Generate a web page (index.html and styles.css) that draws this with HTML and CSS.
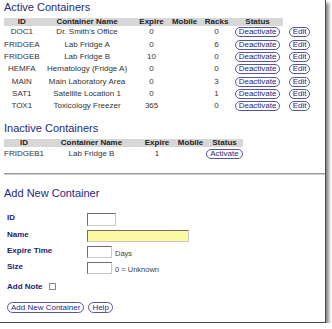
FILE: index.html
```html
<!DOCTYPE html>
<html lang="en">
<head>
    <meta charset="UTF-8">
    <title>Containers</title>
    <link rel="stylesheet" href="styles.css">
</head>
<body>
    <div class="frame">
        <h2 class="section-title">Active Containers</h2>
        <table class="list active-list">
            <tr>
                <th class="col-id">ID</th>
                <th class="col-name">Container Name</th>
                <th class="col-expire">Expire</th>
                <th class="col-mobile">Mobile</th>
                <th class="col-racks">Racks</th>
                <th class="col-status">Status</th>
                <th class="col-edit blank"></th>
            </tr>
            <tr><td>DOC1</td><td>Dr. Smith's Office</td><td>0</td><td></td><td>0</td><td><button>Deactivate</button></td><td><button>Edit</button></td></tr>
            <tr class="tall"><td>FRIDGEA</td><td>Lab Fridge A</td><td>0</td><td></td><td>6</td><td><button>Deactivate</button></td><td><button>Edit</button></td></tr>
            <tr><td>FRIDGEB</td><td>Lab Fridge B</td><td>10</td><td></td><td>0</td><td><button>Deactivate</button></td><td><button>Edit</button></td></tr>
            <tr><td>HEMFA</td><td>Hematology (Fridge A)</td><td>0</td><td></td><td>0</td><td><button>Deactivate</button></td><td><button>Edit</button></td></tr>
            <tr class="tall"><td>MAIN</td><td>Main Laboratory Area</td><td>0</td><td></td><td>3</td><td><button>Deactivate</button></td><td><button>Edit</button></td></tr>
            <tr><td>SAT1</td><td>Satellite Location 1</td><td>0</td><td></td><td>1</td><td><button>Deactivate</button></td><td><button>Edit</button></td></tr>
            <tr><td>TOX1</td><td>Toxicology Freezer</td><td>365</td><td></td><td>0</td><td><button>Deactivate</button></td><td><button>Edit</button></td></tr>
        </table>

        <h2 class="section-title inactive-title">Inactive Containers</h2>
        <table class="list inactive-list">
            <tr>
                <th class="col-id2">ID</th>
                <th class="col-name2">Container Name</th>
                <th class="col-expire2">Expire</th>
                <th class="col-mobile2">Mobile</th>
                <th class="col-status2">Status</th>
            </tr>
            <tr class="tall"><td class="left">FRIDGEB1</td><td>Lab Fridge B</td><td>1</td><td></td><td><button>Activate</button></td></tr>
        </table>

        <hr>

        <h2 class="section-title">Add New Container</h2>
        <form class="add-form">
            <div class="form-row first">
                <label for="cid">ID</label>
                <input type="text" id="cid" class="field field-id">
            </div>
            <div class="form-row">
                <label for="cname">Name</label>
                <input type="text" id="cname" class="field field-name">
            </div>
            <div class="form-row">
                <label for="cexpire">Expire Time</label>
                <input type="text" id="cexpire" class="field field-small">
                <span class="hint">Days</span>
            </div>
            <div class="form-row">
                <label for="csize">Size</label>
                <input type="text" id="csize" class="field field-small">
                <span class="hint">0 = Unknown</span>
            </div>
            <div class="note-row">
                <label for="cnote">Add Note</label>
                <input type="checkbox" id="cnote" class="check">
            </div>
            <div class="button-row">
                <button type="button">Add New Container</button>
                <button type="button">Help</button>
            </div>
        </form>
    </div>
</body>
</html>
```

FILE: styles.css
```css
:root {
    --title-blue: #26287f;
    --label-blue: #1e2070;
    --button-border: #55579c;
    --header-gray: #d7d7d7;
    --text: #333;
}

body {
    margin: 0;
    padding: 0;
    background-color: #fff;
    font-family: "Liberation Sans", Arial, sans-serif;
    color: var(--text);
}

.frame {
    box-sizing: border-box;
    width: 326px;
    height: 323px;
    padding: 1px 0 0 4px;
    border-right: 1px solid #4a4a4a;
    border-bottom: 1px solid #4a4a4a;
    box-shadow: 3px 3px 3px rgba(0, 0, 0, 0.45);
    background-color: #fff;
}

.section-title {
    margin: 0 0 4px;
    font-size: 11px;
    line-height: 13px;
    font-weight: normal;
    color: var(--title-blue);
}

.inactive-title {
    margin-top: 10px;
}

.list {
    border-collapse: collapse;
    font-size: 8px;
}

.list th {
    height: 8px;
    padding: 0;
    line-height: 8px;
    font-weight: bold;
    color: #222;
    background-color: var(--header-gray);
    text-align: center;
}

.list th.blank {
    background-color: transparent;
}

.list td {
    height: 12px;
    padding: 0;
    line-height: 8px;
    text-align: center;
    vertical-align: middle;
}

.list tr.tall td {
    height: 13px;
}

.list td.left {
    text-align: left;
}

.col-id { width: 34px; }
.col-name { width: 95px; }
.col-expire { width: 34px; }
.col-mobile { width: 32px; }
.col-racks { width: 32px; }
.col-status { width: 50px; }
.col-edit { width: 34px; }

.col-id2 { width: 38px; }
.col-name2 { width: 95px; }
.col-expire2 { width: 36px; }
.col-mobile2 { width: 31px; }
.col-status2 { width: 37px; }

button {
    margin: 0;
    padding: 0 3px;
    font-family: "Liberation Sans", Arial, sans-serif;
    font-size: 8px;
    line-height: 8px;
    color: var(--title-blue);
    background-color: #fff;
    border: 1px solid var(--button-border);
    border-radius: 6px;
    vertical-align: middle;
}

hr {
    margin: 13px 0 12px;
    height: 0;
    border: none;
    border-top: 1px solid #9a9a9a;
    border-bottom: 1px solid #cfcfcf;
}

.add-form {
    margin: 11px 0 0;
    padding-left: 3px;
}

.form-row {
    display: flex;
    align-items: center;
    height: 16px;
}

.form-row.first {
    height: 17px;
}

.form-row label,
.note-row label {
    font-size: 8px;
    font-weight: bold;
    color: var(--label-blue);
}

.form-row label {
    width: 80px;
    padding-bottom: 4px;
}

.field {
    box-sizing: border-box;
    margin: 0;
    padding: 0;
    height: 12px;
    border: 1px solid #c8c8c8;
    border-top-color: #6e6e6e;
    border-left-color: #6e6e6e;
    background-color: #fff;
}

.field-id {
    width: 29px;
    height: 13px;
}

.field-name {
    width: 102px;
    background-color: #fbf9a2;
}

.field-small {
    width: 25px;
}

.hint {
    margin-left: 3px;
    padding-top: 2px;
    font-size: 7.5px;
    color: #444;
}

.note-row {
    display: flex;
    align-items: center;
    height: 16px;
    margin-top: 2px;
}

.check {
    appearance: none;
    box-sizing: border-box;
    width: 7px;
    height: 7px;
    margin: 0 0 0 6px;
    border: 1px solid #8a8a8a;
    background-color: #fff;
}

.button-row {
    display: flex;
    gap: 4px;
    margin-top: 8px;
}

.button-row button {
    line-height: 9px;
    padding: 0 3px;
}
```
